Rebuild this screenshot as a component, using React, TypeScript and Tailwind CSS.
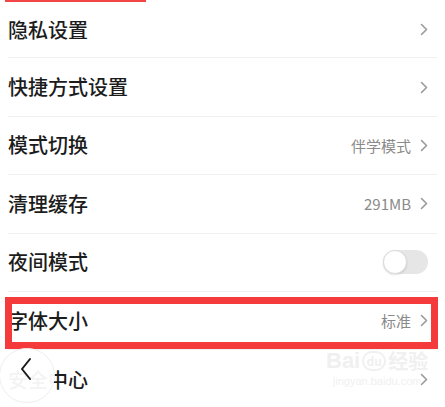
import { ReactNode } from 'react';

type RowProps = {
  title: string;
  value?: string;
  right?: ReactNode;
  height?: string;
  last?: boolean;
};

function Chevron() {
  return (
    <svg width="8" height="13" viewBox="0 0 8 13" fill="none" className="shrink-0">
      <path d="M1.5 1.5 L6.5 6.5 L1.5 11.5" stroke="#9a9a9a" strokeWidth="1.6" strokeLinecap="round" strokeLinejoin="round" />
    </svg>
  );
}

function Toggle() {
  return (
    <div className="flex h-[24px] w-[45px] items-center rounded-full bg-[#e6e6e6]">
      <div className="h-[24px] w-[24px] rounded-full border border-[#dcdcdc] bg-white shadow-[0_1px_2px_rgba(0,0,0,0.12)]" />
    </div>
  );
}

function SettingRow({ title, value, right, height = 'h-[58.4px]', last }: RowProps) {
  return (
    <div
      className={`mx-[8px] flex items-center justify-between pr-[9px] ${height} ${last ? '' : 'border-b border-[#f0f0f0]'}`}
    >
      <span className="text-[20px] font-medium leading-none text-[#1c1c1c]">{title}</span>
      {right ?? (
        <div className="flex items-center gap-[9px]">
          {value ? <span className="text-[15px] leading-none text-[#8a8a8a]">{value}</span> : null}
          <Chevron />
        </div>
      )}
    </div>
  );
}

export default function App() {
  return (
    <div
      className="relative h-[407px] w-[445px] overflow-hidden bg-white"
      style={{ fontFamily: '"Noto Sans CJK SC", "Noto Sans", sans-serif' }}
    >
      {/* tab underline left over from the screen above */}
      <div className="ml-[5px] h-[2px] w-[141px] bg-[#f24646]" />

      <SettingRow title="隐私设置" height="h-[56.4px]" />
      <SettingRow title="快捷方式设置" />
      <SettingRow title="模式切换" value="伴学模式" />
      <SettingRow title="清理缓存" value="291MB" />
      <SettingRow title="夜间模式" right={<Toggle />} />
      <SettingRow title="字体大小" value="标准" />
      <SettingRow title="安全中心" last />

      {/* highlight box */}
      <div className="absolute left-[5px] top-[297px] h-[52px] w-[433px] border-[7px] border-[#f43a3a]" />

      {/* floating back button */}
      <div className="absolute left-[-1px] top-[348px] flex h-[55px] w-[56px] items-center justify-center rounded-full border border-[#eeeeee] bg-white/95">
        <svg width="14" height="24" viewBox="0 0 14 24" fill="none" className="-mt-[14px] -ml-[2px]">
          <path d="M11 2 L3 12 L11 22" stroke="#1a1a1a" strokeWidth="2" strokeLinecap="round" strokeLinejoin="round" />
        </svg>
      </div>

      {/* watermark */}
      <div className="pointer-events-none absolute left-[326px] top-[350px] flex flex-col items-center text-[#f0f0f0]">
        <div className="flex items-center gap-[2px]">
          <span className="font-['Liberation_Sans',sans-serif] text-[22px] font-bold leading-none">Bai</span>
          <span className="flex h-[20px] w-[24px] items-center justify-center rounded-full border-2 border-[#f0f0f0] text-[12px] font-bold leading-none">
            du
          </span>
          <span className="text-[20px] font-bold leading-none">经验</span>
        </div>
        <span className="mt-[4px] font-['Liberation_Sans',sans-serif] text-[11px] leading-none">jingyan.baidu.com</span>
      </div>
    </div>
  );
}
